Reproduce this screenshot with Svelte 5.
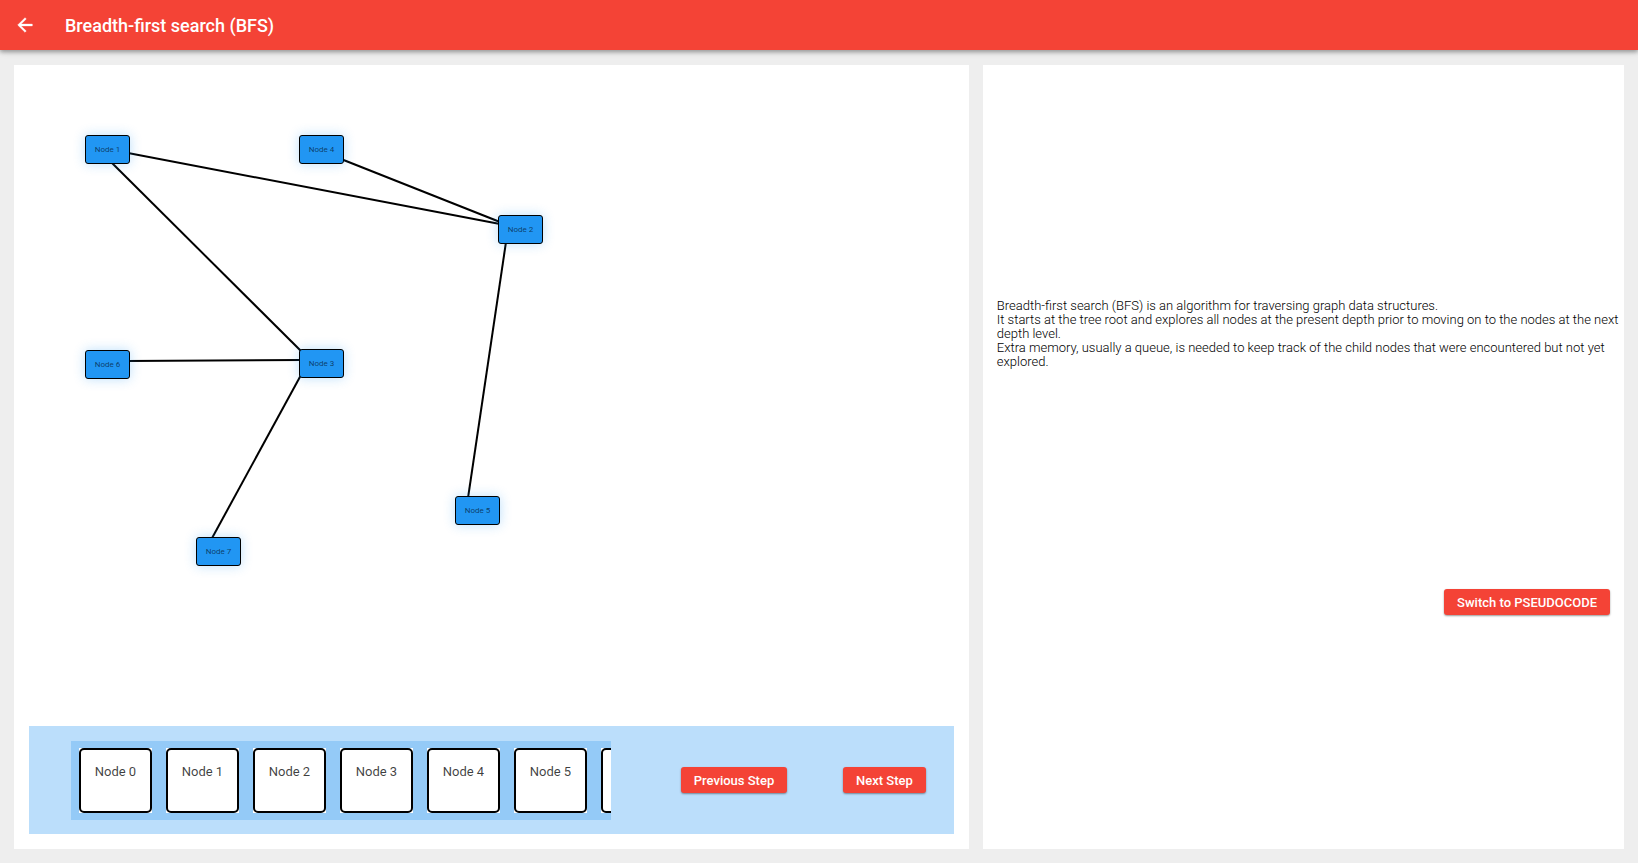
<script>
  const nodes = [
    { id: 1, x: 71, y: 70 },
    { id: 2, x: 484, y: 150 },
    { id: 3, x: 285, y: 284 },
    { id: 4, x: 285, y: 70 },
    { id: 5, x: 441, y: 431 },
    { id: 6, x: 71, y: 285 },
    { id: 7, x: 182, y: 472 }
  ];

  const edges = [
    [114, 88, 486, 159],
    [97, 97, 288, 287],
    [327, 94, 486, 157],
    [492, 177, 454, 433],
    [112, 296, 288, 295],
    [287, 310, 197, 475]
  ];

  const queue = ['Node 0', 'Node 1', 'Node 2', 'Node 3', 'Node 4', 'Node 5', ''];
</script>

<div class="app">
  <header>
    <button class="back" aria-label="Back">
      <svg viewBox="0 0 24 24" width="22" height="22" aria-hidden="true">
        <path d="M20 11H7.83l5.59-5.59L12 4l-8 8 8 8 1.41-1.41L7.83 13H20v-2z" />
      </svg>
    </button>
    <h1>Breadth-first search (BFS)</h1>
  </header>

  <main>
    <section class="panel visual">
      <div class="canvas">
        <svg class="edges" aria-hidden="true">
          {#each edges as [x1, y1, x2, y2]}
            <line {x1} {y1} {x2} {y2} />
          {/each}
        </svg>
        {#each nodes as node (node.id)}
          <div class="node" style="left: {node.x}px; top: {node.y}px">Node {node.id}</div>
        {/each}
      </div>

      <div class="controls">
        <ul class="queue">
          {#each queue as item}
            <li><span>{item}</span></li>
          {/each}
        </ul>
        <button class="action">Previous Step</button>
        <button class="action">Next Step</button>
      </div>
    </section>

    <section class="panel info">
      <p>
        Breadth-first search (BFS) is an algorithm for traversing graph data structures.<br />
        It starts at the tree root and explores all nodes at the present depth prior to moving on to the nodes at the next depth level.<br />
        Extra memory, usually a queue, is needed to keep track of the child nodes that were encountered but not yet explored.
      </p>
      <button class="action">Switch to PSEUDOCODE</button>
    </section>
  </main>
</div>

<style>
  :global(body) {
    margin: 0;
  }

  .app {
    display: flex;
    flex-direction: column;
    min-height: 100vh;
    background: #eeeeee;
    color: rgba(0, 0, 0, 0.75);
    font-family: Roboto, sans-serif;
    font-size: 13px;
    line-height: 14px;
  }

  .app * {
    box-sizing: border-box;
  }

  header {
    display: flex;
    align-items: center;
    height: 50px;
    background: #f44336;
    color: #fff;
    box-shadow: 0 2px 4px rgba(0, 0, 0, 0.3), 0 1px 8px rgba(0, 0, 0, 0.14);
  }

  button {
    border: 0;
    font: inherit;
    cursor: pointer;
  }

  .back {
    display: flex;
    margin: 0 14px;
    padding: 0;
    background: none;
    color: inherit;
  }

  .back path {
    fill: currentColor;
    stroke: currentColor;
    stroke-width: 0.4;
  }

  h1 {
    margin: 0 15px;
    padding-top: 1px;
    font-size: 18px;
    line-height: 22px;
    font-weight: 500;
  }

  main {
    flex: 1;
    display: grid;
    grid-template-columns: 3fr 2fr;
  }

  .panel {
    display: flex;
    flex-direction: column;
    min-width: 0;
    margin: 15px 14px 14px;
    padding: 14px;
    background: #fff;
  }

  .visual {
    padding: 0 15px 15px;
  }

  .canvas {
    position: relative;
    flex: 1;
    min-height: 520px;
    margin: 0 -15px;
  }

  .edges {
    position: absolute;
    width: 100%;
    height: 100%;
  }

  line {
    stroke: #000;
    stroke-width: 2;
  }

  .node {
    position: absolute;
    display: flex;
    align-items: center;
    justify-content: center;
    width: 45px;
    height: 29px;
    border: 1px solid #000;
    border-radius: 3px;
    background: #2196f3;
    box-shadow: 0 0 12px rgba(33, 150, 243, 0.3);
    color: rgba(0, 0, 0, 0.6);
    font-size: 8px;
  }

  .controls {
    display: flex;
    align-items: center;
    justify-content: space-around;
    height: 108px;
    background: #bbdefb;
  }

  .queue {
    display: flex;
    gap: 14px;
    width: 540px;
    margin: 0 14px;
    padding: 7px 8px;
    overflow: hidden;
    background: #94caf7;
    list-style: none;
  }

  li {
    flex: none;
    width: 73px;
    height: 65px;
    background: #fff;
  }

  li span {
    display: block;
    height: 100%;
    padding-top: 15px;
    border: 2px solid #000;
    border-radius: 5px;
    text-align: center;
  }

  .action {
    height: 26px;
    padding: 1px 13px 0;
    border-radius: 3px;
    background: #f44336;
    box-shadow: 0 1px 2px rgba(0, 0, 0, 0.4);
    color: #fff;
    font-weight: 500;
    white-space: nowrap;
  }

  .info {
    justify-content: space-evenly;
    margin-left: 0;
    padding-right: 0;
  }

  p {
    margin: 0;
    color: #000;
    font-weight: 300;
  }

  .info .action {
    align-self: flex-end;
    margin-right: 14px;
  }
</style>
